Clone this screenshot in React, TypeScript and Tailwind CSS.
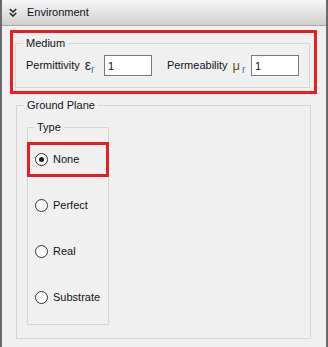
import React from "react";

const font = { fontFamily: '"Liberation Sans", Arial, sans-serif' };

function Radio({ label, checked, highlight }: { label: string; checked?: boolean; highlight?: boolean }) {
  return (
    <div
      className={
        "-mx-[1px] h-[35px] border-[3px] pl-[5px] flex items-center gap-[5px] " +
        (highlight ? "border-[#ea1c24]" : "border-transparent")
      }
    >
      <span className="w-[13px] h-[13px] rounded-full border border-[#333333] bg-white flex items-center justify-center">
        {checked && <span className="w-[5px] h-[5px] rounded-full bg-[#1a1a1a]" />}
      </span>
      <span>{label}</span>
    </div>
  );
}

export default function App() {
  return (
    <div
      className="w-[328px] h-[347px] bg-[#f0f0f0] border-l-2 border-r-2 border-[#6a6a6a] text-[11px] leading-[13px] text-[#101020] overflow-hidden"
      style={font}
    >
      {/* HEADER */}
      <div className="h-[26px] bg-gradient-to-b from-[#f7f7f7] to-[#d0d0d0] border-b border-[#a9a9a9] flex items-center">
        <svg width="8" height="9" viewBox="0 0 8 9" className="ml-[7px]">
          <polyline points="0.8,1 4,4 7.2,1" fill="none" stroke="#222" strokeWidth="1.6" />
          <polyline points="0.8,5 4,8 7.2,5" fill="none" stroke="#222" strokeWidth="1.6" />
        </svg>
        <span className="ml-[10px]">Environment</span>
      </div>

      {/* MEDIUM */}
      <div className="mt-[4px] ml-[8px] w-[307px] h-[64px] border-[3px] border-[#ea1c24] pt-[4px] pl-[2px] pr-[4px]">
        <fieldset className="h-[51px] border border-[#d6d6d6]">
          <legend className="ml-[7px] px-[3px] leading-[13px]">Medium</legend>
          <div className="mt-[5px] pl-[10px] flex items-center">
            <span className="w-[78px] flex items-center">
              <span>Permittivity</span>
              <span className="ml-[5px] flex items-end">
                <span className="text-[14px] text-[#20204a]">ε</span>
                <span className="text-[10px] leading-[10px] text-[#2f6fd0] translate-y-[3px]">r</span>
              </span>
            </span>
            <input
              defaultValue="1"
              className="w-[48px] h-[21px] border border-[#7a7a7a] bg-white px-[3px] text-[11px] outline-none"
              style={font}
            />
            <span className="ml-[15px] w-[84px] flex items-center">
              <span>Permeability</span>
              <span className="ml-[5px] flex items-end">
                <span className="text-[13px] text-[#6b5a22]">μ</span>
                <span className="ml-[2px] text-[10px] leading-[10px] text-[#2f6fd0] translate-y-[3px]">r</span>
              </span>
            </span>
            <input
              defaultValue="1"
              className="w-[48px] h-[21px] border border-[#7a7a7a] bg-white px-[3px] text-[11px] outline-none"
              style={font}
            />
          </div>
        </fieldset>
      </div>

      {/* GROUND PLANE */}
      <fieldset className="mt-[5px] ml-[14px] w-[295px] h-[240px] border border-[#d6d6d6]">
        <legend className="ml-[7px] px-[3px] leading-[13px]">Ground Plane</legend>
        <fieldset className="mt-[9px] ml-[10px] w-[82px] h-[204px] border border-[#d6d6d6]">
          <legend className="ml-[6px] px-[3px] leading-[13px]">Type</legend>
          <div className="mt-[8px] flex flex-col gap-[11px]">
            <Radio label="None" checked highlight />
            <Radio label="Perfect" />
            <Radio label="Real" />
            <Radio label="Substrate" />
          </div>
        </fieldset>
      </fieldset>
    </div>
  );
}
